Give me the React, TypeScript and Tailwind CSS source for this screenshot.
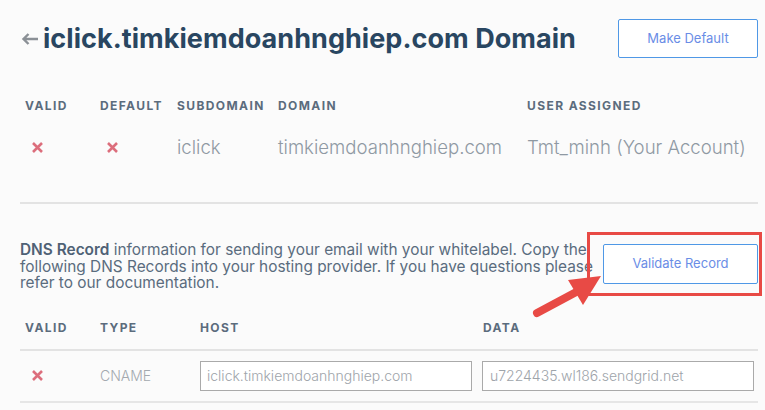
import React from "react";

const XMark = () => (
  <svg width="13" height="13" viewBox="0 0 13 13" className="block">
    <path d="M2 2 L11 11 M11 2 L2 11" stroke="#dc6e7c" strokeWidth="2.6" strokeLinecap="butt" />
  </svg>
);

const headCls =
  "text-[12px] leading-[20px] font-bold tracking-[1.4px] text-[#5b6c7d] uppercase";

export default function App() {
  return (
    <div
      className="relative min-h-screen overflow-hidden bg-[#fbfbfb] pl-5 pr-[7px]"
      style={{ fontFamily: "Inter, 'Noto Sans', sans-serif" }}
    >
      {/* title */}
      <div className="flex items-center justify-between pt-[19px]">
        <h1 className="flex items-center text-[27px] leading-[39px] font-bold tracking-[0.05px] text-[#294661]">
          <svg width="18" height="12" viewBox="0 0 18 12" className="mr-[4px] ml-[1px]">
            <path d="M17 6 H2.5 M7.5 1 L2.5 6 L7.5 11" stroke="#8b9096" strokeWidth="2.4" fill="none" />
          </svg>
          iclick.timkiemdoanhnghiep.com Domain
        </h1>
        <button className="h-[39px] w-[140px] rounded-[2px] border border-[#4f98e6] bg-white text-[13px] text-[#6a8de6]">
          Make Default
        </button>
      </div>

      {/* domain table */}
      <div className="mt-[38px] grid grid-cols-[80px_77px_101px_248px_1fr]">
        <div className={`${headCls} pl-[5px]`}>Valid</div>
        <div className={headCls}>Default</div>
        <div className={headCls}>Subdomain</div>
        <div className={headCls}>Domain</div>
        <div className={`${headCls} pl-px`}>User Assigned</div>
      </div>
      <div className="mt-[19px] grid grid-cols-[80px_77px_101px_248px_1fr] items-center text-[18.6px] leading-[24px] font-light text-[#8f99a3]">
        <div className="pl-[11px]"><XMark /></div>
        <div className="pl-[6px]"><XMark /></div>
        <div>iclick</div>
        <div>timkiemdoanhnghiep.com</div>
        <div className="pl-px">Tmt_minh (Your Account)</div>
      </div>

      <div className="mt-[43px] h-[2px] bg-[#e3e3e3]" />

      {/* dns info */}
      <div className="mt-[38px] flex items-start justify-between">
        <p className="text-[15.4px] leading-[16.5px] whitespace-nowrap text-[#5a6c7e]">
          <b className="font-semibold text-[#4f6175]">DNS Record</b> information for sending your email with your whitelabel. Copy the
          <br />
          following DNS Records into your hosting provider. If you have questions please
          <br />
          refer to our documentation.
        </p>
        <div className="relative mt-[2px]">
          <button className="h-[40px] w-[155px] rounded-[2px] border border-[#4f98e6] bg-white text-[13px] text-[#6a8de6]">
            Validate Record
          </button>
          <div className="absolute -top-[12px] -right-[4px] -bottom-[12px] -left-[16px] border-[3px] border-[#e84a45]" />
        </div>
      </div>

      {/* records table */}
      <div className="mt-[26px] grid grid-cols-[80px_100px_282px_1fr]">
        <div className={`${headCls} pl-[5px]`}>Valid</div>
        <div className={headCls}>Type</div>
        <div className={headCls}>Host</div>
        <div className={`${headCls} pl-px`}>Data</div>
      </div>
      <div className="mt-[11px] h-[2px] bg-[#e3e3e3]" />
      <div className="grid grid-cols-[80px_100px_282px_1fr] items-center py-[10px]">
        <div className="pl-[11px]"><XMark /></div>
        <div className="text-[14px] font-light text-[#a3a9af]">CNAME</div>
        <div className="pr-[10px]">
          <div className="flex h-[30px] items-center border border-[#aaaaaa] bg-white pl-[6px] text-[14px] font-light text-[#9ea4aa]">
            iclick.timkiemdoanhnghiep.com
          </div>
        </div>
        <div className="pr-[4px]">
          <div className="flex h-[30px] items-center border border-[#aaaaaa] bg-white pl-[7px] text-[14px] font-light text-[#9ea4aa]">
            u7224435.wl186.sendgrid.net
          </div>
        </div>
      </div>
      <div className="h-[2px] bg-[#e6e6e6]" />

      {/* annotation arrow */}
      <svg className="pointer-events-none absolute top-0 left-0" width="765" height="410">
        <line x1="537" y1="313" x2="580" y2="290" stroke="#e84a45" strokeWidth="8" strokeLinecap="round" />
        <polygon points="568,280 601,276 583,305" fill="#e84a45" />
      </svg>
    </div>
  );
}
